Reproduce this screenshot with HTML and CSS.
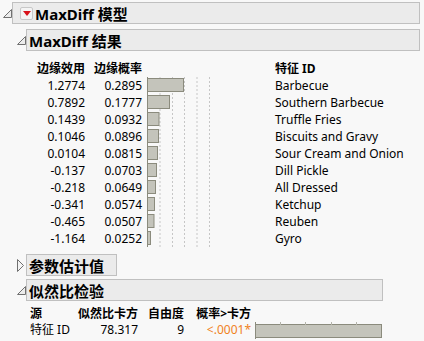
FILE: index.html
```html
<!DOCTYPE html>
<html lang="zh">
<head>
    <meta charset="UTF-8">
    <meta name="viewport" content="width=device-width, initial-scale=1.0">
    <title>MaxDiff 模型</title>
    <link rel="stylesheet" href="styles.css">
</head>
<body>
    <div class="report">
        <div class="node">
            <div class="node-head">
                <span class="tog"><svg width="9" height="9"><path d="M0.5 8.5 L8.5 0.5 L8.5 8.5 Z" fill="#ececec" stroke="#707070"/></svg></span>
                <div class="title-box wide">
                    <span class="red-btn"><svg width="8" height="5"><path d="M0 0 H8 L4 5 Z" fill="#d8121b"/></svg></span>
                    <span class="title">MaxDiff 模型</span>
                </div>
            </div>
            <div class="node-body">
                <div class="node">
                    <div class="node-head">
                        <span class="tog"><svg width="9" height="9"><path d="M0.5 8.5 L8.5 0.5 L8.5 8.5 Z" fill="#ececec" stroke="#707070"/></svg></span>
                        <div class="title-box wide">
                            <span class="title">MaxDiff 结果</span>
                        </div>
                    </div>
                    <div class="results">
                        <div class="th num">边缘效用</div>
                        <div class="th num">边缘概率</div>
                        <div></div>
                        <div class="th">特征 ID</div>
                        <div class="chart">
                            <svg width="128" height="170">
                                <g stroke="#c6c6c6" stroke-dasharray="2 2">
                                    <line x1="13" y1="0" x2="13" y2="170"/>
                                    <line x1="25.5" y1="0" x2="25.5" y2="170"/>
                                    <line x1="37.5" y1="0" x2="37.5" y2="170"/>
                                    <line x1="50" y1="0" x2="50" y2="170"/>
                                    <line x1="62.5" y1="0" x2="62.5" y2="170"/>
                                </g>
                                <g fill="#c4c4bb" stroke="#8b8b7d">
                                    <rect x="0.5" y="1.5" width="36" height="13"/>
                                    <rect x="0.5" y="18.5" width="22" height="13"/>
                                    <rect x="0.5" y="35.5" width="11.5" height="13"/>
                                    <rect x="0.5" y="52.5" width="11" height="13"/>
                                    <rect x="0.5" y="69.5" width="10" height="13"/>
                                    <rect x="0.5" y="86.5" width="9" height="13"/>
                                    <rect x="0.5" y="103.5" width="8" height="13"/>
                                    <rect x="0.5" y="120.5" width="7" height="13"/>
                                    <rect x="0.5" y="137.5" width="6.5" height="13"/>
                                    <rect x="0.5" y="154.5" width="3" height="13"/>
                                </g>
                                <line x1="0.5" y1="0" x2="0.5" y2="170" stroke="#8b8b7d"/>
                            </svg>
                        </div>
                        <div class="num">1.2774</div><div class="num">0.2895</div><div>Barbecue</div>
                        <div class="num">0.7892</div><div class="num">0.1777</div><div>Southern Barbecue</div>
                        <div class="num">0.1439</div><div class="num">0.0932</div><div>Truffle Fries</div>
                        <div class="num">0.1046</div><div class="num">0.0896</div><div>Biscuits and Gravy</div>
                        <div class="num">0.0104</div><div class="num">0.0815</div><div>Sour Cream and Onion</div>
                        <div class="num">-0.137</div><div class="num">0.0703</div><div>Dill Pickle</div>
                        <div class="num">-0.218</div><div class="num">0.0649</div><div>All Dressed</div>
                        <div class="num">-0.341</div><div class="num">0.0574</div><div>Ketchup</div>
                        <div class="num">-0.465</div><div class="num">0.0507</div><div>Reuben</div>
                        <div class="num">-1.164</div><div class="num">0.0252</div><div>Gyro</div>
                    </div>
                </div>

                <div class="node closed-node">
                    <div class="node-head">
                        <span class="tog"><svg width="8" height="13"><path d="M0.5 0.5 L6.5 6.5 L0.5 12.5 Z" fill="#f4f4f4" stroke="#707070"/></svg></span>
                        <div class="title-box">
                            <span class="title">参数估计值</span>
                        </div>
                    </div>
                </div>

                <div class="node lr-node">
                    <div class="node-head">
                        <span class="tog"><svg width="9" height="9"><path d="M0.5 8.5 L8.5 0.5 L8.5 8.5 Z" fill="#ececec" stroke="#707070"/></svg></span>
                        <div class="title-box lr-box">
                            <span class="title">似然比检验</span>
                        </div>
                    </div>
                    <div class="lr-table">
                        <div class="th">源</div>
                        <div class="th num">似然比卡方</div>
                        <div class="th num">自由度</div>
                        <div class="th num">概率&gt;卡方</div>
                        <div></div>
                        <div>特征 ID</div>
                        <div class="num">78.317</div>
                        <div class="num">9</div>
                        <div class="num pval">&lt;.0001*</div>
                        <div class="pbar">
                            <svg width="127" height="17">
                                <rect x="0.5" y="2.5" width="126" height="13" fill="#c4c4bb" stroke="#8b8b7d"/>
                                <g stroke="#b4b4aa">
                                    <line x1="25.5" y1="0" x2="25.5" y2="3"/>
                                    <line x1="50.5" y1="0" x2="50.5" y2="3"/>
                                    <line x1="76.5" y1="0" x2="76.5" y2="3"/>
                                    <line x1="101.5" y1="0" x2="101.5" y2="3"/>
                                </g>
                                <line x1="0.5" y1="0" x2="0.5" y2="17" stroke="#8b8b7d"/>
                            </svg>
                        </div>
                    </div>
                </div>
            </div>
        </div>
    </div>
</body>
</html>
```

FILE: styles.css
```css
body {
    margin: 0;
    background-color: #f8f8f8;
    font-family: "Noto Sans", "Noto Sans CJK SC", sans-serif;
    font-size: 12px;
    color: #000;
}
.report {
    padding: 2px 4px 0 3px;
}
.node-head {
    display: flex;
    align-items: center;
}
.tog {
    width: 9px;
    display: flex;
    align-items: center;
}
.node-body {
    padding-left: 14px;
}
.node-body > .node:first-child .node-head {
    margin-top: 5px;
}
.title-box {
    display: flex;
    align-items: center;
    height: 20px;
    background-color: #ebebeb;
    border: 1px solid #c0c0c0;
    padding: 0 12px 0 2px;
}
.title-box.wide {
    flex: 1;
}
.lr-box {
    width: 341px;
}
.title {
    font-size: 15px;
    font-weight: bold;
    white-space: nowrap;
}
.red-btn {
    width: 11px;
    height: 11px;
    margin: 0 2px 0 5px;
    border: 1px solid #c8c8c8;
    border-radius: 2px;
    background-color: #f4f4f4;
    display: flex;
    align-items: center;
    justify-content: center;
}
.results {
    display: grid;
    grid-template-columns: 55px 57px 133px auto;
    grid-auto-rows: 17px;
    line-height: 17px;
    padding: 9px 0 0 13px;
}
.th {
    font-weight: bold;
}
.num {
    text-align: right;
}
.chart {
    grid-column: 3;
    grid-row: 2 / span 10;
    padding-left: 5px;
}
.chart svg {
    display: block;
}
.closed-node .node-head {
    margin-top: 7px;
}
.lr-node .node-head {
    margin-top: 3px;
}
.lr-table {
    display: grid;
    grid-template-columns: 48px 60px 46px 67px auto;
    grid-template-rows: 16px 17px;
    line-height: 16px;
    padding: 5px 0 0 13px;
}
.pval {
    color: #f0821e;
}
.pbar {
    padding-left: 4px;
}
.pbar svg {
    display: block;
}
```
